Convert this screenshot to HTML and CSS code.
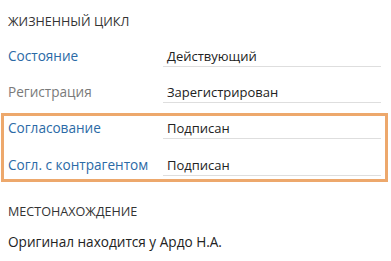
FILE: index.html
```html
<!DOCTYPE html>
<html lang="ru">
<head>
    <meta charset="UTF-8">
    <meta name="viewport" content="width=device-width, initial-scale=1.0">
    <title>Карточка документа</title>
    <link rel="stylesheet" href="styles.css">
</head>
<body>

<div class="card">
    <h2 class="section-title">Жизненный цикл</h2>

    <div class="field">
        <div class="field-label">Состояние</div>
        <div class="field-value">Действующий</div>
    </div>
    <div class="field">
        <div class="field-label muted">Регистрация</div>
        <div class="field-value">Зарегистрирован</div>
    </div>

    <div class="highlight">
        <div class="field">
            <div class="field-label">Согласование</div>
            <div class="field-value">Подписан</div>
        </div>
        <div class="field">
            <div class="field-label">Согл. с контрагентом</div>
            <div class="field-value">Подписан</div>
        </div>
    </div>

    <h2 class="section-title location">Местонахождение</h2>
    <p class="note">Оригинал находится у Ардо Н.А.</p>
</div>

</body>
</html>
```

FILE: styles.css
```css
body {
    font-family: "Open Sans", "Noto Sans", sans-serif;
    font-size: 13px;
    color: #222;
    background-color: #fff;
    margin: 0;
}
.card {
    padding: 12px 0 0 8px;
    width: 373px;
}
.section-title {
    margin: 0;
    font-size: 12.6px;
    font-weight: normal;
    line-height: 20px;
    text-transform: uppercase;
    color: #333;
}
.field {
    display: grid;
    grid-template-columns: 155px 218px;
    margin-top: 14px;
    line-height: 20px;
}
.field + .field {
    margin-top: 15px;
}
.field-label {
    font-size: 13.6px;
    color: #2b6aa6;
}
.field-label.muted {
    color: #7a7a7a;
}
.field-value {
    padding-left: 4px;
    border-bottom: 1px solid #dedede;
}
.highlight {
    margin: 10px 0 0 -7px;
    width: 377px;
    padding: 2px 0 3px 4px;
    border: 3px solid #eda86c;
}
.highlight .field:first-child {
    margin-top: 0;
}
.highlight .field + .field {
    margin-top: 16px;
}
.location {
    margin-top: 20px;
}
.note {
    margin: 10px 0 0;
    font-size: 13.6px;
    line-height: 20px;
}
```
